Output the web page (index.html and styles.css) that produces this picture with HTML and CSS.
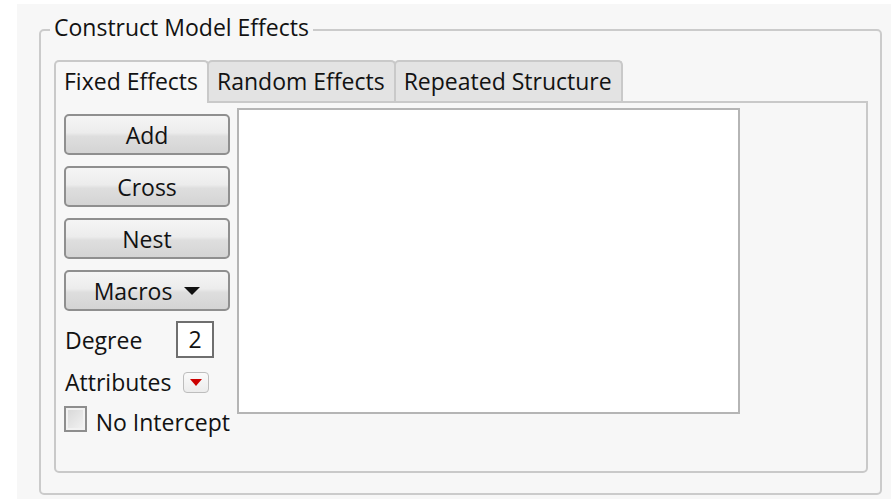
FILE: index.html
```html
<!DOCTYPE html>
<html lang="en">
<head>
<meta charset="utf-8">
<title>Construct Model Effects</title>
<link rel="stylesheet" href="styles.css">
</head>
<body>
<div class="window">
  <fieldset class="group">
    <legend class="group-title">Construct Model Effects</legend>
    <div class="tabs">
      <div class="tab tab-active">Fixed Effects</div>
      <div class="tab">Random Effects</div>
      <div class="tab">Repeated Structure</div>
    </div>
    <div class="tab-panel">
      <div class="controls">
        <button class="btn" type="button">Add</button>
        <button class="btn" type="button">Cross</button>
        <button class="btn" type="button">Nest</button>
        <button class="btn" type="button">Macros<span class="caret"></span></button>
        <div class="row row-degree">
          <span class="row-label">Degree</span>
          <span class="num-box">2</span>
        </div>
        <div class="row row-attrs">
          <span class="row-label">Attributes</span>
          <span class="menu-btn"><span class="menu-caret"></span></span>
        </div>
        <label class="check">
          <span class="check-box"></span>
          <span class="check-text">No Intercept</span>
        </label>
      </div>
      <div class="effects-list"></div>
    </div>
  </fieldset>
</div>
</body>
</html>
```

FILE: styles.css
```css
html, body {
  margin: 0;
  padding: 0;
  background: #ffffff;
}

body {
  font-family: "Open Sans", "Noto Sans", sans-serif;
  font-size: 23px;
  color: #121212;
  overflow: hidden;
}

.window {
  margin: 4px 0 0 17px;
  height: 495px;
  background: #f7f7f7;
  padding-top: 8px;
  box-sizing: border-box;
}

/* group box with title in the top border */
.group {
  margin: 0 9px 0 22px;
  padding: 12px 12px 20px 13px;
  border: 2px solid #cbcbcb;
  border-radius: 5px;
  min-width: 0;
}

.group-title {
  padding: 0 4px 6px 4px;
  margin-left: -4px;
  line-height: 30px;
  font-size: 23px;
}

/* tab strip */
.tabs {
  display: flex;
  height: 41px;
  position: relative;
  z-index: 1;
}

.tab {
  box-sizing: border-box;
  height: 41px;
  padding: 0 9px 0 8px;
  line-height: 39px;
  background: #e3e3e3;
  border: 2px solid #c9c9c9;
  border-bottom: none;
  border-radius: 5px 5px 0 0;
  white-space: nowrap;
}

.tab + .tab {
  margin-left: -2px;
}

.tab-active {
  background: #f7f7f7;
  height: 43px;
  margin-bottom: -2px;
}

.tab-panel {
  box-sizing: border-box;
  height: 372px;
  border: 2px solid #c9c9c9;
  border-radius: 0 0 5px 5px;
  display: flex;
  align-items: flex-start;
  padding-left: 8px;
}

/* left column of controls */
.controls {
  width: 166px;
  display: flex;
  flex-direction: column;
  padding-top: 11px;
}

.btn {
  box-sizing: border-box;
  width: 166px;
  height: 41px;
  margin: 0 0 11px 0;
  padding: 0;
  border: 2px solid #8f8f8f;
  border-radius: 5px;
  background: linear-gradient(#f5f5f5 0%, #ececec 45%, #dedede 55%, #d4d4d4 100%);
  font-family: inherit;
  font-size: 23px;
  color: #121212;
  display: flex;
  align-items: center;
  justify-content: center;
}

.caret {
  display: inline-block;
  width: 0;
  height: 0;
  margin-left: 12px;
  border-left: 8px solid transparent;
  border-right: 8px solid transparent;
  border-top: 8px solid #111111;
}

.row {
  display: flex;
  align-items: center;
}

.row-label {
  padding-left: 1px;
}

.row-degree {
  height: 37px;
  margin-top: -1px;
}

.row-degree .row-label {
  width: 111px;
}

.num-box {
  box-sizing: border-box;
  width: 38px;
  height: 37px;
  background: #ffffff;
  border: 2px solid #6f6f6f;
  text-align: center;
  line-height: 33px;
}

.row-attrs {
  height: 28px;
  margin-top: 10px;
}

.row-attrs .row-label {
  width: 118px;
}

.menu-btn {
  box-sizing: border-box;
  width: 26px;
  height: 21px;
  border: 1px solid #bdbdbd;
  border-radius: 4px;
  background: linear-gradient(#fafafa, #ececec);
  display: flex;
  align-items: center;
  justify-content: center;
}

.menu-caret {
  width: 0;
  height: 0;
  border-left: 6px solid transparent;
  border-right: 6px solid transparent;
  border-top: 7px solid #cc0000;
}

.check {
  display: flex;
  align-items: center;
  height: 30px;
  margin-top: 8px;
}

.check-box {
  box-sizing: border-box;
  width: 26px;
  height: 26px;
  border: 2px solid #8e8e8e;
  background: linear-gradient(135deg, #d6d6d6, #f4f4f4);
  box-shadow: inset 0 0 0 2px #f2f2f2;
  margin-right: 9px;
}

.check-text {
  white-space: nowrap;
  padding-top: 6px;
}

.effects-list {
  box-sizing: border-box;
  width: 503px;
  height: 306px;
  margin: 5px 0 0 7px;
  background: #ffffff;
  border: 2px solid #b5b5b5;
}
```
